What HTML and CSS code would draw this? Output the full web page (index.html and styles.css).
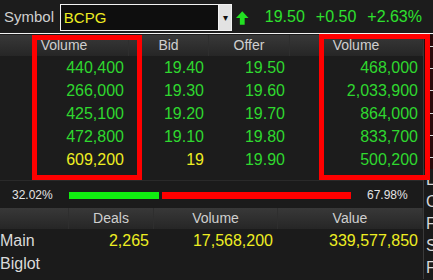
FILE: index.html
```html
<!DOCTYPE html>
<html lang="en">
<head>
  <meta charset="UTF-8" />
  <title>BCPG Bid / Offer</title>
  <link rel="stylesheet" href="styles.css">
</head>
<body>
  <div class="screen">

    <div class="topbar">
      <span class="sym-label">Symbol</span>
      <div class="sym-box">
        <span class="sym-text">BCPG</span>
        <span class="sym-drop">&#9662;</span>
      </div>
      <svg class="up-arrow" width="13" height="14" viewBox="0 0 13 14">
        <path d="M6.5 0 L13 7 H9 V14 H4 V7 H0 Z" fill="#22e022"/>
      </svg>
      <span class="quote">19.50</span>
      <span class="quote">+0.50</span>
      <span class="quote">+2.63%</span>
    </div>

    <div class="body-row">
      <div class="main">

        <div class="book">
          <div class="grid head book-cols">
            <div>Volume</div>
            <div>Bid</div>
            <div>Offer</div>
            <div>Volume</div>
          </div>
          <div class="grid row book-cols"><div>440,400</div><div>19.40</div><div>19.50</div><div>468,000</div></div>
          <div class="grid row book-cols"><div>266,000</div><div>19.30</div><div>19.60</div><div>2,033,900</div></div>
          <div class="grid row book-cols"><div>425,100</div><div>19.20</div><div>19.70</div><div>864,000</div></div>
          <div class="grid row book-cols"><div>472,800</div><div>19.10</div><div>19.80</div><div>833,700</div></div>
          <div class="grid row book-cols"><div class="yel">609,200</div><div class="yel">19</div><div>19.90</div><div>500,200</div></div>

          <!-- highlight frames drawn on top of the table -->
          <div class="mark mark-bid"></div>
          <div class="mark mark-offer"></div>
        </div>

        <div class="ratio">
          <span class="pct pct-left">32.02%</span>
          <div class="bar">
            <div class="bar-buy" style="width: 32.02%"></div>
            <div class="bar-sell"></div>
          </div>
          <span class="pct">67.98%</span>
        </div>

        <div class="grid head deal-cols">
          <div></div>
          <div>Deals</div>
          <div>Volume</div>
          <div>Value</div>
        </div>
        <div class="grid row deal-cols">
          <div class="lbl">Main</div>
          <div class="yel">2,265</div>
          <div class="yel">17,568,200</div>
          <div class="yel">339,577,850</div>
        </div>
        <div class="grid row deal-cols">
          <div class="lbl">Biglot</div>
          <div></div><div></div><div></div>
        </div>

      </div>

      <div class="side">
        <div class="side-chart">
          <i></i><i></i><i></i><i></i><i></i><i></i>
        </div>
        <div class="side-txt">L</div>
        <div class="side-txt">C</div>
        <div class="side-txt">F</div>
        <div class="side-txt">S</div>
        <div class="side-txt">F</div>
      </div>
    </div>

  </div>
</body>
</html>
```

FILE: styles.css
```css
html, body {
  margin: 0;
  padding: 0;
  background: #1b1b1b;
}
.screen {
  width: 433px;
  height: 280px;
  overflow: hidden;
  font-family: 'Liberation Sans', Arial, sans-serif;
  color: #d6d6d6;
  background: #1b1b1b;
}

/* top symbol bar */
.topbar {
  height: 33px;
  display: flex;
  align-items: center;
  padding-left: 4px;
  border-bottom: 1px solid #f2f2f2;
  margin-bottom: 1px;
  background: #1c1c1c;
  white-space: nowrap;
}
.sym-label {
  font-size: 15px;
  color: #d0d0d0;
  width: 58px;
}
.sym-box {
  width: 177px;
  height: 25px;
  border: 1px solid #f2f2f2;
  background: #0e0e0e;
  display: flex;
  align-items: center;
  margin-top: 2px;
}
.sym-text {
  flex: 1;
  font-size: 15px;
  color: #eeee22;
  padding-left: 3px;
}
.sym-drop {
  width: 12px;
  height: 25px;
  border-left: 1px solid #f2f2f2;
  background: #e2e2e2;
  color: #111;
  font-size: 10px;
  line-height: 25px;
  text-align: center;
}
.up-arrow {
  margin-left: 4px;
  margin-right: 16px;
  margin-top: 3px;
}
.quote {
  font-size: 16px;
  color: #2ee02e;
  margin-right: 11px;
}

/* body */
.body-row {
  display: flex;
}
.main {
  width: 423px;
}
.grid {
  display: grid;
}
.book-cols {
  grid-template-columns: 129px 80px 81px 133px;
}
.deal-cols {
  grid-template-columns: 69px 85px 124px 145px;
}
.head {
  height: 21px;
  line-height: 21px;
  font-size: 14px;
  color: #cfcfcf;
  background: linear-gradient(#383838, #262626);
}
.head > div {
  text-align: center;
  border-right: 1px solid #2e2e2e;
}
.row {
  height: 23px;
  line-height: 23px;
  font-size: 16px;
  color: #2fd82f;
}
.row > div {
  text-align: right;
  padding-right: 5px;
}
.row .yel {
  color: #eeee22;
}
.row .lbl {
  text-align: left;
  color: #dadada;
}

/* order book */
.book {
  position: relative;
  padding-bottom: 9px;
  background: #1c1c1c;
}
.mark {
  position: absolute;
  border: 5px solid #ff0000;
  box-sizing: border-box;
}
.mark-bid {
  left: 32px;
  top: 0;
  width: 110px;
  height: 145px;
}
.mark-offer {
  left: 319px;
  top: -1px;
  width: 111px;
  height: 146px;
}

/* buy / sell ratio */
.ratio {
  height: 27px;
  display: flex;
  align-items: center;
  border-top: 1px solid #2a2a2a;
  font-size: 12px;
  color: #e4e4e4;
}
.pct-left {
  width: 57px;
  padding-left: 12px;
}
.bar {
  width: 282px;
  height: 7px;
  display: flex;
  gap: 3px;
  margin-right: 16px;
  margin-top: 2px;
}
.bar-buy {
  background: #11ee11;
}
.bar-sell {
  flex: 1;
  background: #ff0000;
}

/* right sliver */
.side {
  width: 9px;
  border-left: 1px solid #3a3a3a;
  overflow: hidden;
  background: #1a1a1a;
}
.side-chart {
  height: 134px;
  background: #2a0a0a;
  display: flex;
  flex-direction: column;
  justify-content: space-around;
}
.side-chart i {
  display: block;
  height: 1px;
  margin-left: 4px;
  background: #d8d8d8;
}
.side-txt {
  height: 22px;
  line-height: 22px;
  font-size: 16px;
  color: #d8d8d8;
  padding-left: 2px;
}
```
